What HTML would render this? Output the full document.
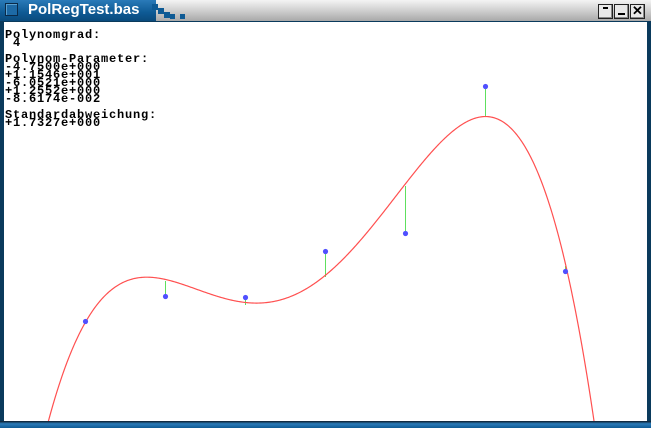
<!DOCTYPE html>
<html><head><style>
html,body{margin:0;padding:0;width:651px;height:428px;overflow:hidden;background:#0a3a5c;}
#tb{position:absolute;left:0;top:0;width:651px;height:21px;background:linear-gradient(#f4f4f4,#c8c8c8 60%,#a8a8a8);}
#tab{position:absolute;left:0;top:0;width:156px;height:21px;background:linear-gradient(#2a7ab8,#0e5a94 60%,#0a4a7c);}
#ico{position:absolute;left:5px;top:3px;width:11px;height:11px;border:1px solid #0a2a48;background:#1d6aa6;box-shadow:inset 1px 1px 0 #5aa0d0;}
#ttl{position:absolute;left:28px;top:1px;font:bold 15px "Liberation Sans",sans-serif;color:#fff;}
.sq{position:absolute;background:#0e5a94;}
.btn{position:absolute;top:4px;width:13px;height:13px;background:#e8e8e8;border:1px solid #222;box-shadow:inset -1px -1px 0 #888;}
#content{position:absolute;left:4px;top:22px;width:643px;height:399px;background:#fff;overflow:hidden;}
#bb{position:absolute;left:0;top:421px;width:651px;height:7px;background:linear-gradient(#0a1a28,#2a7ab8 40%,#0e5a94);}
#txt{position:absolute;left:1px;top:9px;margin:0;font:bold 12px "Liberation Mono",monospace;line-height:8px;letter-spacing:0.8px;color:#000;white-space:pre;}
svg{position:absolute;left:0;top:0;}
</style></head><body>
<div id="tb"></div>
<div id="tab"><div id="ico"></div><div id="ttl">PolRegTest.bas</div></div>
<div class="sq" style="left:152px;top:4px;width:6px;height:6px"></div>
<div class="sq" style="left:158px;top:8px;width:6px;height:6px"></div>
<div class="sq" style="left:164px;top:12px;width:6px;height:6px"></div>
<div class="sq" style="left:170px;top:14px;width:5px;height:5px"></div>
<div class="sq" style="left:180px;top:14px;width:5px;height:5px"></div>
<div class="btn" style="left:598px"><div style="position:absolute;left:4px;top:2px;width:5px;height:2px;background:#000"></div></div>
<div class="btn" style="left:614px"><div style="position:absolute;left:3px;top:8px;width:7px;height:2px;background:#000"></div></div>
<div class="btn" style="left:630px"><div style="position:absolute;left:1px;top:-2px;font:bold 13px 'Liberation Sans',sans-serif">✕</div></div>
<div id="bb"></div>
<div id="content">
<pre id="txt">Polynomgrad:
 4

Polynom-Parameter:
-4.7500e+000
+1.1546e+001
-6.0521e+000
+1.2552e+000
-8.6174e-002

Standardabweichung:
+1.7327e+000</pre>
<svg width="643" height="399" viewBox="4 22 643 399">
<g stroke="#5ee05e" stroke-width="1">
<line x1="85.5" y1="321" x2="85.5" y2="323"/>
<line x1="165.5" y1="296" x2="165.5" y2="281"/>
<line x1="245.5" y1="297" x2="245.5" y2="305"/>
<line x1="325.5" y1="251" x2="325.5" y2="277"/>
<line x1="405.5" y1="233" x2="405.5" y2="186"/>
<line x1="485.5" y1="86" x2="485.5" y2="117"/>
<line x1="565.5" y1="271" x2="565.5" y2="266"/>
</g>
<path id="curve" fill="none" stroke="#ff5050" stroke-width="1.2" d=""/>
<g fill="#5050ff">
<circle cx="85.5" cy="321.5" r="2.6"/><circle cx="165.5" cy="296.5" r="2.6"/><circle cx="245.5" cy="297.5" r="2.6"/><circle cx="325.5" cy="251.5" r="2.6"/><circle cx="405.5" cy="233.5" r="2.6"/><circle cx="485.5" cy="86.5" r="2.6"/><circle cx="565.5" cy="271.5" r="2.6"/>
</g>
</svg>
</div>
<script>
var d="";
for(var x=40;x<=600;x+=1){var t=(x-5)/80;var p=-4.75+11.546*t-6.0521*t*t+1.2552*t*t*t-0.086174*t*t*t*t;var y=417.5-49.4*p;if(y>440)y=440;d+=(d?"L":"M")+x+" "+y.toFixed(2);}
document.getElementById("curve").setAttribute("d",d);
</script>
</body></html>
